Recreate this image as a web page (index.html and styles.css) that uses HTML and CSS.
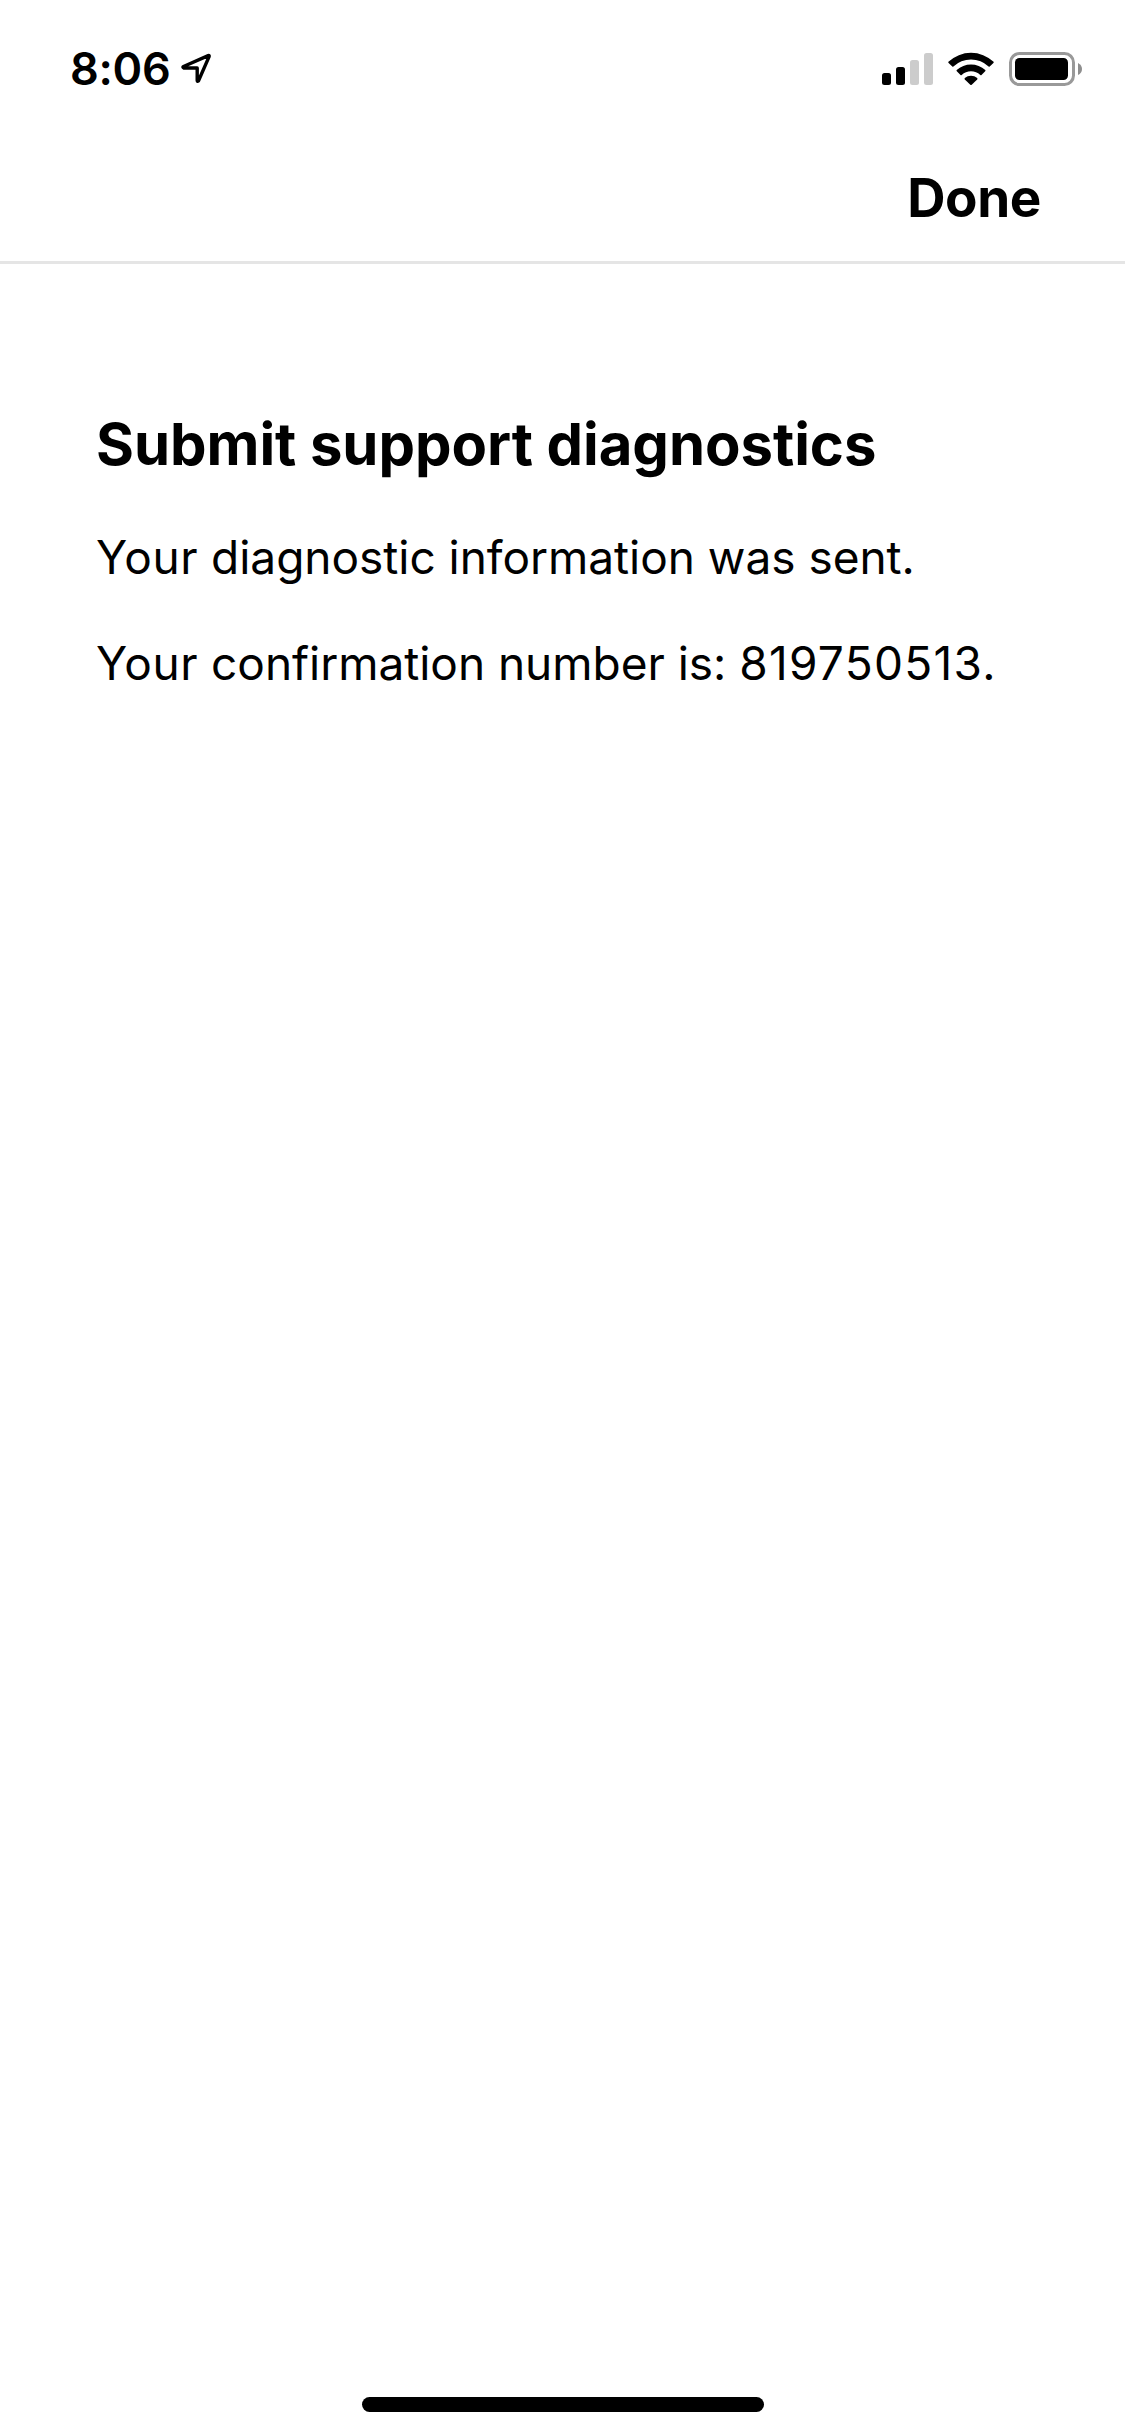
FILE: index.html
```html
<!DOCTYPE html>
<html lang="en">
<head>
<meta charset="utf-8">
<title>Submit support diagnostics</title>
<link rel="stylesheet" href="styles.css">
</head>
<body>
<div class="screen">
  <header class="status-bar">
    <div class="clock">
      <span class="time">8:06</span>
      <svg class="location" width="34" height="34" viewBox="0 0 34 34" aria-hidden="true">
        <path d="M4.5 15.5 29.2 4.6Q30.6 4.2 30.1 5.6L19.4 30Q18.2 31 18.2 29.6V17H4.8Q3.2 16.2 4.5 15.5Z" fill="none" stroke="#000" stroke-width="3.4" stroke-linejoin="round"/>
      </svg>
    </div>
    <div class="indicators">
      <svg class="signal" width="52" height="33" viewBox="0 0 52 33" aria-hidden="true">
        <rect x="0" y="20" width="9" height="12" rx="2.5"/>
        <rect x="14" y="14" width="9" height="18" rx="2.5"/>
        <rect x="28" y="7" width="9" height="25" rx="2.5" fill="#ccc"/>
        <rect x="42" y="0" width="9" height="32" rx="2.5" fill="#ccc"/>
      </svg>
      <svg class="wifi" width="46" height="34" viewBox="0 0 46 34" aria-hidden="true">
        <path d="M0.4 9.8A33 33 0 0 1 45.6 9.8Q46 10.4 45.4 11L41.7 14.6Q41.2 15 40.6 14.5A25.5 25.5 0 0 0 5.4 14.5Q4.8 15 4.3 14.6L.6 11Q0 10.4.4 9.8Z"/>
        <path d="M8.7 18.1A21 21 0 0 1 37.3 18.1Q37.8 18.7 37.2 19.3L33.5 22.9Q32.9 23.4 32.3 22.9A14 14 0 0 0 13.7 22.9Q13.1 23.4 12.5 22.9L8.8 19.3Q8.2 18.7 8.7 18.1Z"/>
        <path d="M16.8 26.1A9.6 9.6 0 0 1 29.2 26.1Q29.8 26.8 29.2 27.4L23.7 32.8Q23 33.4 22.3 32.8L16.8 27.4Q16.2 26.8 16.8 26.1Z"/>
      </svg>
      <svg class="battery" width="74" height="34" viewBox="0 0 74 34" aria-hidden="true">
        <rect x="1.5" y="1.5" width="63" height="31" rx="9" fill="none" stroke="#999" stroke-width="3"/>
        <rect x="6" y="6" width="53" height="22" rx="4.5"/>
        <path d="M69 11Q73 13 73 17T69 23Z" fill="#8e8e8e"/>
      </svg>
    </div>
  </header>
  <nav class="nav-bar"><button class="done" type="button">Done</button></nav>
  <main class="content">
    <h1 class="title">Submit support diagnostics</h1>
    <p class="message"><span class="lead">Your</span> diagnostic information was sent.</p>
    <p class="message"><span class="lead">Your</span> confirmation number is: <span class="number">819750513.</span></p>
  </main>
  <footer class="home-area"><div class="home-indicator"></div></footer>
</div>
</body>
</html>
```

FILE: styles.css
```css
* { box-sizing: border-box; }
body {
  margin: 0;
  background: #fff;
  color: #000;
  font-family: Inter, "Liberation Sans", sans-serif;
}
.screen {
  display: flex;
  flex-direction: column;
  width: 1125px;
  height: 2436px;
}
.status-bar {
  display: flex;
  justify-content: space-between;
  align-items: flex-start;
  height: 132px;
  padding: 39px 42px 0 70px;
}
.clock, .indicators { display: flex; align-items: flex-start; }
.time {
  width: 109px;
  font-size: 45px;
  font-weight: 600;
  line-height: 60px;
  letter-spacing: -0.3px;
  white-space: nowrap;
}
.location { margin-top: 12px; }
.indicators { padding-top: 13px; }
.signal { margin-top: 1px; }
.wifi { margin-left: 14px; }
.battery { margin-left: 15px; }
.nav-bar {
  display: flex;
  justify-content: flex-end;
  height: 132px;
  padding: 36px 84px 0 0;
  border-bottom: 3px solid #e5e5e5;
}
.done {
  height: 60px;
  padding: 0;
  border: 0;
  background: none;
  color: inherit;
  font: 700 53px/60px Inter, "Liberation Sans", sans-serif;
  letter-spacing: -0.4px;
}
.content {
  flex: 1;
  padding: 144px 96px 0;
}
.title {
  margin: 0 0 47px;
  font-size: 58px;
  font-weight: 700;
  line-height: 72px;
  letter-spacing: -0.05px;
  white-space: nowrap;
}
.message {
  margin: 0 0 46px;
  font-size: 46px;
  line-height: 60px;
  letter-spacing: -0.03px;
  white-space: nowrap;
}
.lead { letter-spacing: 0.6px; }
.number { letter-spacing: 1.3px; }
.home-area {
  display: flex;
  justify-content: center;
  padding-bottom: 24px;
}
.home-indicator {
  width: 402px;
  height: 15px;
  border-radius: 8px;
  background: #000;
}
```
